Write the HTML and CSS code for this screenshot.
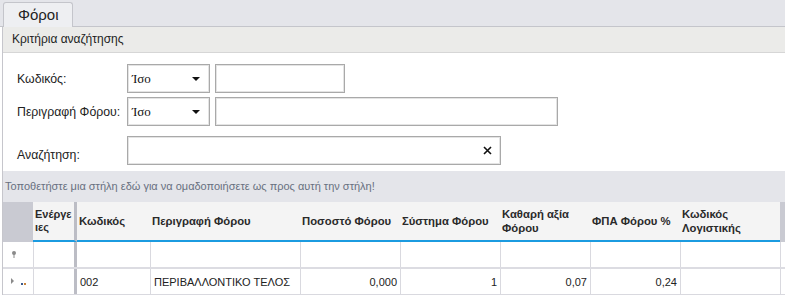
FILE: index.html
```html
<!DOCTYPE html>
<html lang="el">
<head>
    <meta charset="UTF-8">
    <title>Φόροι</title>
    <link rel="stylesheet" href="styles.css">
</head>
<body>

    <div class="tab-strip">
        <div class="tab">Φόροι</div>
    </div>

    <div class="panel">
        <div class="panel-head">Κριτήρια αναζήτησης</div>

        <div class="criteria">
            <div class="crit-row">
                <label>Κωδικός:</label>
                <div class="combo"><span>Ίσο</span><i class="arrow"></i></div>
                <div class="field field-short"></div>
            </div>
            <div class="crit-row">
                <label>Περιγραφή Φόρου:</label>
                <div class="combo"><span>Ίσο</span><i class="arrow"></i></div>
                <div class="field field-long"></div>
            </div>
            <div class="crit-row search-row">
                <label>Αναζήτηση:</label>
                <div class="field field-search">
                    <svg width="9" height="9" viewBox="0 0 9 9"><path d="M1 1L8 8M8 1L1 8" stroke="#111" stroke-width="1.6"/></svg>
                </div>
            </div>
        </div>

        <div class="group-panel">Τοποθετήστε μια στήλη εδώ για να ομαδοποιήσετε ως προς αυτή την στήλη!</div>

        <div class="grid">
            <div class="grid-row head">
                <div class="cell ind"></div>
                <div class="cell act">Ενέργειες</div>
                <div class="cell">Κωδικός</div>
                <div class="cell">Περιγραφή Φόρου</div>
                <div class="cell">Ποσοστό Φόρου</div>
                <div class="cell">Σύστημα Φόρου</div>
                <div class="cell">Καθαρή αξία Φόρου</div>
                <div class="cell">ΦΠΑ Φόρου %</div>
                <div class="cell">Κωδικός Λογιστικής</div>
                <div class="cell end"></div>
            </div>
            <div class="grid-row filter">
                <div class="cell ind">
                    <svg width="6" height="7" viewBox="0 0 6 7"><circle cx="3" cy="2" r="2" fill="#8a8a8a"/><rect x="2.5" y="3" width="1" height="4" fill="#8a8a8a"/></svg>
                </div>
                <div class="cell act"></div>
                <div class="cell"></div>
                <div class="cell"></div>
                <div class="cell"></div>
                <div class="cell"></div>
                <div class="cell"></div>
                <div class="cell"></div>
                <div class="cell"></div>
                <div class="cell end"></div>
            </div>
            <div class="grid-row data">
                <div class="cell ind">
                    <svg width="18" height="8" viewBox="0 0 18 8"><path d="M0 0L3 3L0 6Z" fill="#8a8a8a"/><rect x="10" y="5" width="2" height="2" fill="#3b5a8c"/><rect x="13" y="5" width="2" height="2" fill="#c8843c"/></svg>
                </div>
                <div class="cell act"></div>
                <div class="cell">002</div>
                <div class="cell">ΠΕΡΙΒΑΛΛΟΝΤΙΚΟ ΤΕΛΟΣ</div>
                <div class="cell num">0,000</div>
                <div class="cell num">1</div>
                <div class="cell num">0,07</div>
                <div class="cell num">0,24</div>
                <div class="cell"></div>
                <div class="cell end"></div>
            </div>
        </div>
    </div>

</body>
</html>
```

FILE: styles.css
```css
* {
    margin: 0;
    padding: 0;
    box-sizing: border-box;
}

body {
    font-family: "Liberation Sans", Arial, sans-serif;
    font-size: 12px;
    color: #1e1e1e;
    background-color: #fff;
    width: 785px;
    height: 300px;
    overflow: hidden;
}

/* tab strip */
.tab-strip {
    display: flex;
    height: 27px;
    padding: 2px 0 0 3px;
    background-color: #e4e5ea;
    border-bottom: 1px solid #c4c5cb;
}

.tab {
    width: 70px;
    height: 25px;
    padding-left: 14px;
    font-size: 15px;
    line-height: 24px;
    color: #222;
    background-color: #eeeff2;
    border: 1px solid #c4c5cb;
    border-bottom: none;
    border-radius: 3px 3px 0 0;
}

/* panel */
.panel {
    margin-left: 2px;
    border-left: 1px solid #c6c6cc;
}

.panel-head {
    height: 26px;
    padding-left: 9px;
    line-height: 25px;
    font-size: 12px;
    background-color: #ebebe9;
    border-bottom: 1px solid #d6d6d6;
}

.criteria {
    display: flex;
    flex-direction: column;
    gap: 4px;
    padding: 11px 0 6px 14px;
}

.crit-row {
    display: flex;
    align-items: center;
    gap: 5px;
}

.crit-row label {
    width: 105px;
    font-size: 12.3px;
    color: #222;
}

.search-row {
    margin-top: 6px;
}

.search-row label {
    padding-top: 9px;
}

.combo,
.field {
    height: 29px;
    border: 1px solid #a9a9a9;
    box-shadow: inset 0 0 0 1px #e4e4e4;
    background-color: #fff;
}

.combo {
    display: flex;
    align-items: center;
    justify-content: space-between;
    width: 83px;
    padding: 0 9px 0 4px;
    font-family: "Liberation Serif", "Times New Roman", serif;
    font-size: 13px;
    color: #111;
}

.arrow {
    width: 0;
    height: 0;
    border-left: 4px solid transparent;
    border-right: 4px solid transparent;
    border-top: 4px solid #111;
}

.field-short {
    width: 130px;
}

.field-long {
    width: 343px;
}

.field-search {
    display: flex;
    align-items: center;
    justify-content: flex-end;
    width: 374px;
    padding-right: 8px;
}

/* group panel */
.group-panel {
    height: 31px;
    padding-left: 2px;
    line-height: 31px;
    font-size: 11px;
    color: #687080;
    background-color: #e4e5ea;
}

/* grid */
.grid-row {
    display: grid;
    grid-template-columns: 30px 44px 73px 150px 100px 100px 90px 90px 100px 5px;
}

.cell {
    display: flex;
    align-items: center;
    padding: 0 2px;
    font-size: 11px;
    color: #222;
    overflow: hidden;
}

.act {
    border-right: 3px solid #bcbdc5;
}

.head {
    height: 40px;
    background-color: #f4f4f4;
}

.head .cell {
    font-weight: bold;
    font-size: 11.3px;
    line-height: 14px;
    color: #2a2a2a;
    border-bottom: 2px solid #1b9be0;
}

.head .act {
    font-size: 11px;
    line-height: 13px;
    word-break: break-all;
}

.head .ind,
.head .end {
    background-color: #c9cad2;
    border-bottom: none;
}

.filter {
    height: 27px;
    border-bottom: 2px solid #dcdce2;
}

.data {
    height: 26px;
    border-bottom: 1px solid #d9d9df;
}

.filter .cell,
.data .cell {
    border-left: 1px solid #d9d9df;
    padding: 0 3px;
}

.filter .ind,
.data .ind {
    border-left: none;
    padding-left: 8px;
}

.filter .act,
.data .act {
    border-right: 3px solid #bcbdc5;
}

.filter .cell:nth-child(3),
.data .cell:nth-child(3) {
    border-left: none;
}

.data .num {
    justify-content: flex-end;
}

.filter .end,
.data .end {
    padding: 0;
}
```
